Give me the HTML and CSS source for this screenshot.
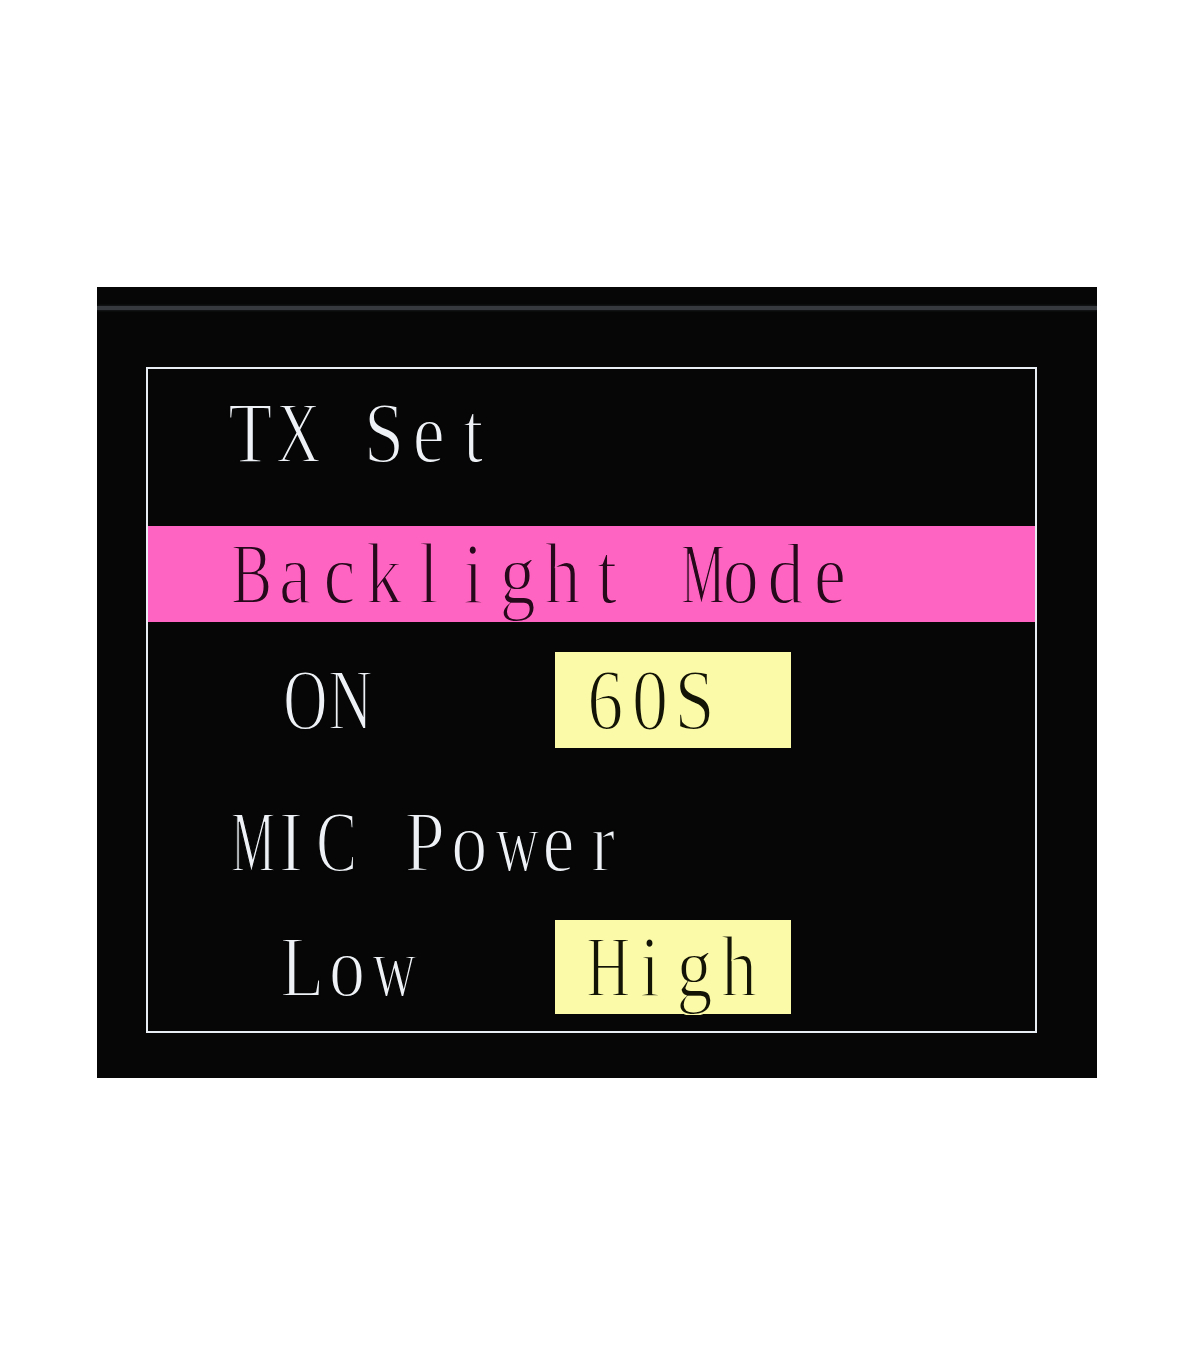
FILE: index.html
```html
<!DOCTYPE html>
<html lang="en">
<head>
    <meta charset="UTF-8">
    <meta name="viewport" content="width=device-width, initial-scale=1.0">
    <title>TX Set</title>
    <link rel="stylesheet" href="styles.css">
</head>
<body>
    <div class="screen">
        <div class="bezel-line"></div>
        <div class="frame">
            <div class="row title">
                <span class="txt"><span class="c">T</span><span class="c n">X</span><span class="c"> </span><span class="c">S</span><span class="c">e</span><span class="c">t</span></span>
            </div>
            <div class="row selected">
                <span class="txt"><span class="c n">B</span><span class="c">a</span><span class="c">c</span><span class="c">k</span><span class="c">l</span><span class="c">i</span><span class="c">g</span><span class="c">h</span><span class="c">t</span><span class="c"> </span><span class="c m">M</span><span class="c">o</span><span class="c">d</span><span class="c">e</span></span>
            </div>
            <div class="row option">
                <div class="label"><span class="txt"><span class="c n">O</span><span class="c n">N</span></span></div>
                <div class="value"><span class="txt"><span class="c">6</span><span class="c">0</span><span class="c">S</span></span></div>
            </div>
            <div class="row heading">
                <span class="txt"><span class="c m">M</span><span class="c">I</span><span class="c n">C</span><span class="c"> </span><span class="c">P</span><span class="c">o</span><span class="c n">w</span><span class="c">e</span><span class="c">r</span></span>
            </div>
            <div class="row option last">
                <div class="label"><span class="txt"><span class="c">L</span><span class="c">o</span><span class="c n">w</span></span></div>
                <div class="value"><span class="txt"><span class="c n">H</span><span class="c">i</span><span class="c">g</span><span class="c">h</span></span></div>
            </div>
        </div>
    </div>
</body>
</html>
```

FILE: styles.css
```css
body {
    margin: 0;
    background-color: #ffffff;
    font-family: "Liberation Serif", "Times New Roman", serif;
}
.screen {
    width: 1000px;
    height: 791px;
    margin: 287px 0 0 97px;
    background-color: #060606;
    overflow: hidden;
}
.bezel-line {
    height: 4px;
    margin-top: 19px;
    background-color: #363a3e;
    box-shadow: 0 0 3px #2a2d30;
}
.frame {
    width: 887px;
    height: 662px;
    margin: 57px 0 0 49px;
    border: 2px solid #e8edf3;
    color: #eef2f6;
    /* thin the strokes like the LCD font */
    -webkit-text-stroke: 1.6px #060606;
}
.row {
    display: flex;
    align-items: center;
    padding-left: 80px;
}
/* LCD font: fixed character cells, stretched tall */
.txt {
    display: inline-block;
    font-size: 72px;
    line-height: 1;
    white-space: pre;
    transform: scaleY(1.2);
    transform-origin: left center;
}
.c {
    display: inline-block;
    width: 44.6px;
    text-align: center;
}
/* squeeze wide glyphs into their cell */
.c.n {
    transform: scaleX(0.85);
}
.c.m {
    transform: scaleX(0.68);
}
.title {
    height: 128px;
}
.selected {
    height: 96px;
    margin-top: 29px;
    background-color: #fe64c1;
    color: #260a1c;
    -webkit-text-stroke-color: #fe64c1;
}
.option {
    height: 96px;
    margin-top: 30px;
    padding-left: 132px;
}
.option.last {
    height: 94px;
}
.heading {
    height: 96px;
    margin-top: 46px;
    padding-left: 76px;
}
.label {
    width: 275px;
}
.value {
    width: 236px;
    height: 100%;
    box-sizing: border-box;
    padding-left: 28px;
    display: flex;
    align-items: center;
    background-color: #fafaa8;
    color: #141406;
    -webkit-text-stroke-color: #fafaa8;
}
```
